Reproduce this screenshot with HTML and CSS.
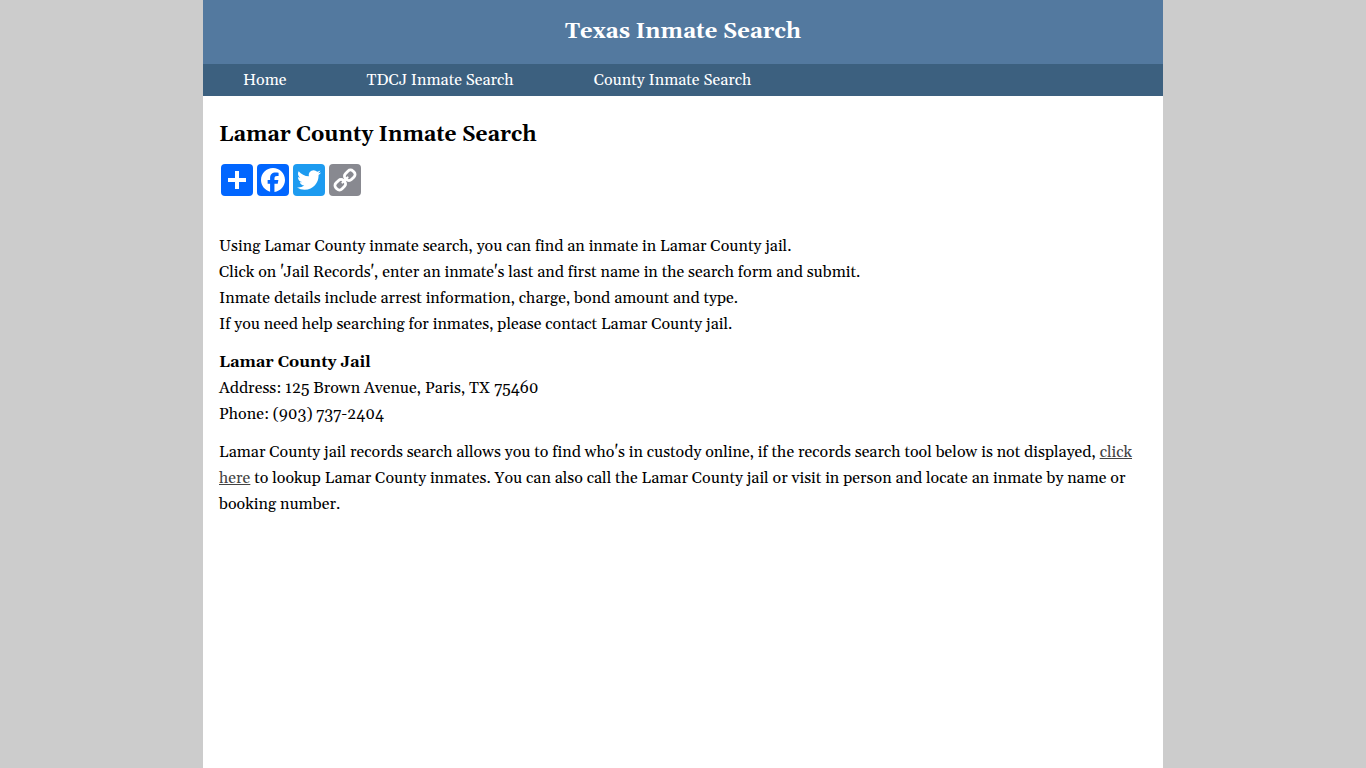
FILE: index.html
```html
<!DOCTYPE html>
<html lang="en">
<head>
    <meta charset="UTF-8">
    <meta name="viewport" content="width=device-width, initial-scale=1.0">
    <title>Lamar County Inmate Search</title>
    <link rel="stylesheet" href="styles.css">
</head>
<body>
    <div class="wrapper">
        <header class="header">
            <a href="/">Texas Inmate Search</a>
        </header>
        <nav class="menu">
            <a href="/">Home</a>
            <a href="/tdcj-inmate-search">TDCJ Inmate Search</a>
            <a href="/county-inmate-search">County Inmate Search</a>
        </nav>
        <main class="content">
            <h1>Lamar County Inmate Search</h1>
            <div class="share">
                <a class="share-more" href="#share" aria-label="Share">
                    <svg viewBox="0 0 32 32"><path fill="#fff" d="M14 7h4v18h-4zM7 14h18v4H7z"/></svg>
                </a>
                <a class="share-facebook" href="#facebook" aria-label="Facebook">
                    <svg viewBox="0 0 32 32"><path fill="#fff" d="M28 16c0-6.627-5.373-12-12-12S4 9.373 4 16c0 5.628 3.875 10.35 9.101 11.647v-7.98h-2.474V16H13.1v-1.58c0-4.085 1.849-5.978 5.859-5.978.76 0 2.072.15 2.608.298v3.325c-.283-.03-.775-.045-1.386-.045-1.967 0-2.728.745-2.728 2.683V16h3.92l-.673 3.667h-3.247v8.245C23.395 27.195 28 22.135 28 16"/></svg>
                </a>
                <a class="share-twitter" href="#twitter" aria-label="Twitter">
                    <svg viewBox="0 0 32 32"><path fill="#fff" d="M28 8.557a10 10 0 0 1-2.828.775 4.93 4.93 0 0 0 2.166-2.725 9.7 9.7 0 0 1-3.13 1.194 4.92 4.92 0 0 0-3.593-1.55 4.924 4.924 0 0 0-4.794 6.049c-4.09-.21-7.72-2.17-10.15-5.15a4.94 4.94 0 0 0-.665 2.477c0 1.71.87 3.214 2.19 4.1a5 5 0 0 1-2.23-.616v.06c0 2.39 1.7 4.38 3.952 4.83-.414.115-.85.174-1.297.174q-.476-.001-.928-.086a4.935 4.935 0 0 0 4.6 3.42 9.9 9.9 0 0 1-6.114 2.107q-.597 0-1.175-.068a13.95 13.95 0 0 0 7.55 2.213c9.056 0 14.01-7.507 14.01-14.013q0-.32-.015-.637c.96-.695 1.795-1.56 2.455-2.55z"/></svg>
                </a>
                <a class="share-link" href="#copy" aria-label="Copy Link">
                    <svg viewBox="0 0 32 32">
                        <g fill="none" stroke="#fff" stroke-width="2.8" transform="rotate(-45 16 16)">
                            <rect x="4" y="11.8" width="10.6" height="8.4" rx="3.4"/>
                            <rect x="17.4" y="11.8" width="10.6" height="8.4" rx="3.4"/>
                            <path d="M12.4 16h7.2" stroke-width="2.2" stroke-linecap="round"/>
                        </g>
                    </svg>
                </a>
            </div>
            <p>
                Using Lamar County inmate search, you can find an inmate in Lamar County jail.<br>
                Click on 'Jail Records', enter an inmate's last and first name in the search form and submit.<br>
                Inmate details include arrest information, charge, bond amount and type.<br>
                If you need help searching for inmates, please contact Lamar County jail.
            </p>
            <p>
                <strong>Lamar County Jail</strong><br>
                Address: 125 Brown Avenue, Paris, TX 75460<br>
                Phone: (903) 737-2404
            </p>
            <p>
                Lamar County jail records search allows you to find who's in custody online, if the records search tool below is not displayed, <a href="#records">click here</a> to lookup Lamar County inmates. You can also call the Lamar County jail or visit in person and locate an inmate by name or booking number.
            </p>
        </main>
    </div>
</body>
</html>
```
FILE: styles.css
```css
body {
    margin: 0;
    background-color: #cccccc;
    color: #000000;
    font-family: Georgia, Gelasio, "Liberation Serif", serif;
    font-size: 16px;
    font-variant-ligatures: none;
    line-height: 26px;
}

.wrapper {
    max-width: 960px;
    min-height: 100vh;
    margin: 0 auto;
    background-color: #ffffff;
}

.header {
    padding: 16px;
    background-color: #53799f;
    text-align: center;
    font-size: 22px;
    font-weight: bold;
    line-height: 32px;
}

.header a {
    color: #ffffff;
    text-decoration: none;
}

.menu {
    display: flex;
    flex-wrap: wrap;
    background-color: #3c607f;
}

.menu a {
    padding: 0 40px;
    color: #ffffff;
    line-height: 32px;
    text-decoration: none;
}

.content {
    padding: 20px 16px;
}

.content h1 {
    margin: 0 0 10px;
    font-size: 21px;
    line-height: 38px;
}

.content p {
    margin: 0 0 12px;
}

.content p a {
    color: #444444;
}

.share {
    display: flex;
    gap: 4px;
    margin-bottom: 37px;
    padding: 0 2px;
}

.share a {
    width: 32px;
    height: 32px;
    border-radius: 4px;
}

.share svg {
    display: block;
}

.share-more,
.share-facebook {
    background-color: #0166ff;
}

.share-twitter {
    background-color: #1d9bf0;
}

.share-link {
    background-color: #888990;
}
```
